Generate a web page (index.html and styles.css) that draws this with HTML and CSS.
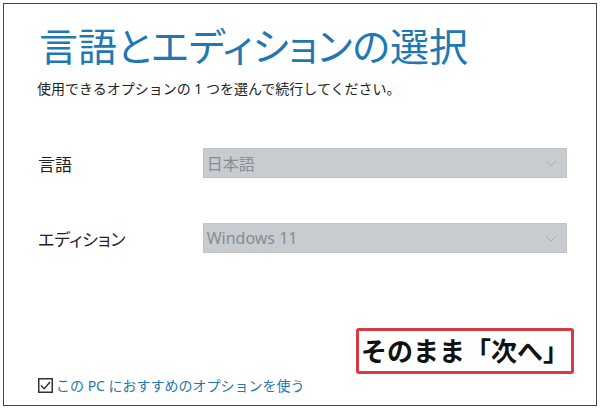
FILE: index.html
```html
<!DOCTYPE html>
<html lang="ja">
<head>
  <meta charset="UTF-8" />
  <title>言語とエディションの選択</title>
  <link rel="stylesheet" href="styles.css">
</head>
<body>

  <div class="window">

    <h1 class="title">言語とエディションの選択</h1>
    <p class="subtitle">使用できるオプションの 1 つを選んで続行してください。</p>

    <div class="form">
      <div class="row">
        <span class="label">言語</span>
        <div class="select">
          <span>日本語</span>
          <svg class="chevron" width="12" height="7" viewBox="0 0 12 7"><polyline points="1,1 6,6 11,1" /></svg>
        </div>
      </div>
      <div class="row">
        <span class="label">エディション</span>
        <div class="select">
          <span>Windows 11</span>
          <svg class="chevron" width="12" height="7" viewBox="0 0 12 7"><polyline points="1,1 6,6 11,1" /></svg>
        </div>
      </div>
    </div>

    <div class="footer">
      <div class="callout">そのまま「次へ」</div>
      <label class="check">
        <svg class="box" width="15" height="15" viewBox="0 0 15 15">
          <rect x="0.75" y="0.75" width="13.5" height="13.5" />
          <polyline points="3,7.5 6.2,10.7 12,4" />
        </svg>
        <span>この PC におすすめのオプションを使う</span>
      </label>
    </div>

  </div>

</body>
</html>
```

FILE: styles.css
```css
:root {
  --blue: #1f78b4;
  --field: #c8ccd0;
  --field-text: #878c90;
  --red: #d83b3d;
}

body {
  margin: 0;
  background: white;
  font-family: "Noto Sans", "Noto Sans CJK JP", sans-serif;
  color: #222;
}

.window {
  box-sizing: border-box;
  width: 594px;
  height: 403px;
  margin: 3px;
  border: 1px solid #444;
  padding: 0 29px 0 33px;
  display: flex;
  flex-direction: column;
}

.title {
  margin: 16px 0 0 2px;
  font-size: 39px;
  font-weight: 400;
  line-height: 52px;
  color: var(--blue);
  font-feature-settings: "palt";
}

.subtitle {
  margin: 7px 0 0;
  font-size: 14px;
  line-height: 20px;
}

.form {
  margin-top: 49px;
  display: flex;
  flex-direction: column;
  gap: 45px;
}

.row {
  display: flex;
  align-items: center;
}

.label {
  width: 165px;
  font-size: 17px;
  padding-left: 1px;
  font-feature-settings: "palt";
}

.select {
  box-sizing: border-box;
  width: 365px;
  height: 30px;
  background: var(--field);
  border: 1px solid #bfc3c7;
  display: flex;
  align-items: center;
  justify-content: space-between;
  padding: 0 9px 0 3px;
  font-size: 16px;
  color: var(--field-text);
}

.chevron polyline {
  fill: none;
  stroke: #a9aeb2;
  stroke-width: 1;
}

.footer {
  margin-top: auto;
  display: flex;
  flex-direction: column;
}

.callout {
  align-self: flex-end;
  box-sizing: border-box;
  width: 218px;
  height: 46px;
  margin-right: -7px;
  border: 3px solid var(--red);
  border-radius: 3px;
  font-size: 26px;
  font-weight: 700;
  line-height: 40px;
  text-align: center;
  color: #111;
}

.check {
  display: flex;
  align-items: center;
  gap: 3px;
  margin: 1px 0 10px 1px;
  font-size: 14px;
  color: var(--blue);
}

.box rect {
  fill: white;
  stroke: #333;
  stroke-width: 1.5;
}

.box polyline {
  fill: none;
  stroke: #333;
  stroke-width: 1.5;
}
```
